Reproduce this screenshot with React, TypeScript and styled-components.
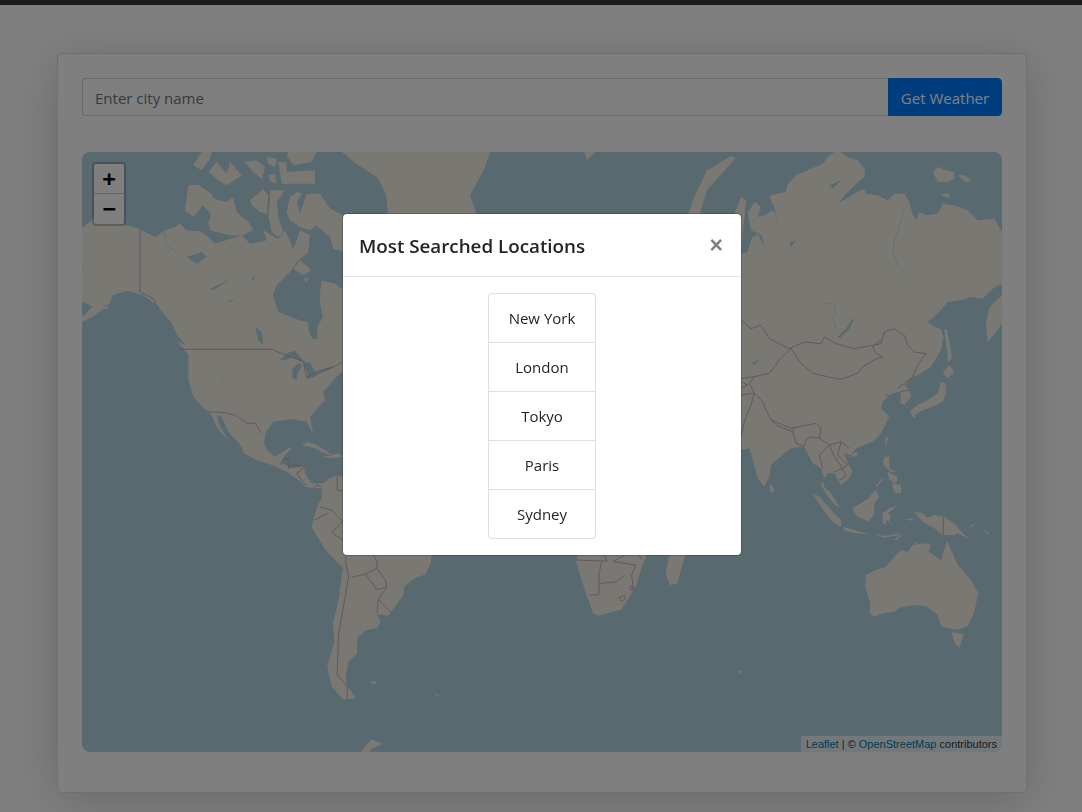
import React from "react";
import styled, { createGlobalStyle } from "styled-components";

const UI_FONT = `"Open Sans", "Noto Sans", "Liberation Sans", sans-serif`;
const LOCATIONS = ["New York", "London", "Tokyo", "Paris", "Sydney"];

const WATER = "#b0d4e0";
const LAND_COLOR = "#f5f0e6";

type Pt = [number, number];

// web mercator at zoom 2 -> page pixels
const geo = (pts: Pt[]): Pt[] =>
  pts.map(([lon, lat]) => {
    const merc = Math.log(Math.tan(Math.PI / 4 + (lat * Math.PI) / 360));
    return [542 + (lon / 360) * 1024, 510 - (merc / (2 * Math.PI)) * 1024];
  });

// traced at 3x from origin ox,oy
const traced = (ox: number, oy: number, pts: Pt[]): Pt[] =>
  pts.map(([x, y]) => [ox + x / 3, oy + y / 3]);

const toPath = (ring: Pt[], close = true) =>
  "M" +
  ring.map(([x, y]) => `${x.toFixed(1)} ${y.toFixed(1)}`).join("L") +
  (close ? "Z" : "");

const ARCTIC = (pts: Pt[]) => traced(130, 152, pts);
const SIBERIA = (pts: Pt[]) => traced(741, 152, pts);
const ASIA = (pts: Pt[]) => traced(741, 340, pts);
const OCEANIA = (pts: Pt[]) => traced(741, 500, pts);
const STATES = (pts: Pt[]) => traced(160, 340, pts);

const LAND: Pt[][] = [
  // north + central america
  [
    ...geo([[-168,65.6],[-164,66.5],[-162,67],[-166,68.3],[-163,69.5],[-157,71.2],[-152,70.8],[-146,70.2]]),
    ...ARCTIC([[0,222],[25,230],[75,255],[105,235],[135,225],[150,215],[170,235],[210,238],[235,255],[255,275],[310,258],[335,250],[360,275],[410,265],[400,235],[425,250],[445,262],[465,235],[490,290],[500,265],[510,235],[540,250],[535,300],[500,330],[480,360],[440,400],[428,430],[445,480]]),
    ...geo([[-85,55.3],[-82.3,55],[-82,53],[-80.5,51.3],[-79,51.5],[-79,54],[-77,56],[-78,58.5],[-78,60.5],[-77.5,62.5],[-73,62],[-70,61],[-69.5,59],[-66,58.5],[-64.5,60.3],[-62,57.5],[-60,55],[-56,52.5],[-59,50.3],[-65,50.2],[-69,48.5],[-65,49.2],[-64.5,48],[-65,47],[-64,46],[-61,45.5],[-65,43.5],[-66.5,45],[-67.5,44.5]]),
    ...STATES([[549,95],[540,100],[490,155],[495,180],[450,230],[460,285],[440,245],[395,238],[340,245],[318,275],[312,310],[320,330],[345,350],[385,325],[400,322],[375,345],[365,370],[400,385],[433,375],[435,400],[455,430],[480,430],[500,432],[485,445],[460,445],[435,440],[415,420],[380,395],[335,375],[290,360],[250,340],[245,320],[205,275],[185,230],[170,225],[180,260],[210,305],[190,285],[170,260],[150,215],[130,205],[100,170],[85,120],[85,45],[55,5]]),
    ...geo([[-125,50],[-128,52],[-130.5,55],[-135,58],[-140,60],[-146,60.8],[-151,60],[-152,58.5],[-158,56],[-164,54.5],[-158,58],[-162,59],[-165,61],[-165,63.5],[-161,64.5],[-166,64.6]]),
  ],
  // canadian arctic
  ARCTIC([[470,180],[480,135],[500,120],[515,125],[500,150],[510,185],[530,125],[570,125],[600,170],[639,190],[660,230],[690,300],[640,300],[610,290],[600,255],[570,230],[560,220],[540,235],[510,225],[480,205]]),
  ARCTIC([[420,115],[465,115],[440,150],[445,195],[460,240],[445,255],[425,240],[415,190],[420,150]]),
  ARCTIC([[360,145],[400,112],[415,130],[410,185],[390,180],[365,160]]),
  ARCTIC([[220,160],[245,135],[265,145],[290,150],[310,135],[320,180],[355,210],[370,235],[340,250],[300,250],[240,235],[235,210],[245,190]]),
  ARCTIC([[165,175],[175,100],[205,98],[250,130],[215,165],[190,195]]),
  ARCTIC([[190,40],[215,0],[245,0],[240,20],[215,55]]),
  ARCTIC([[235,60],[260,30],[290,65],[300,30],[335,70],[290,100],[265,85]]),
  ARCTIC([[345,30],[380,25],[405,45],[395,80],[370,60]]),
  ARCTIC([[445,30],[470,30],[470,60],[555,55],[555,95],[455,95]]),
  ARCTIC([[470,10],[480,-10],[570,-10],[560,0],[545,30],[490,40]]),
  ARCTIC([[415,70],[435,65],[440,95],[420,88]]),
  ARCTIC([[410,15],[440,20],[435,45],[415,35]]),
  ARCTIC([[490,350],[510,325],[545,355],[520,370]]),
  ARCTIC([[520,380],[535,378],[530,390]]),
  geo([[-59,47.7],[-53,46.7],[-52.7,47.6],[-56,51.5],[-57.5,50.5]]),
  geo([[-128.3,50.7],[-123.5,48.4],[-125,48.7]]),
  geo([[-154.5,57.5],[-152.5,57.5],[-153,58.4]]),
  STATES([[425,315],[445,306],[470,315],[525,350],[490,338],[465,325]]),
  STATES([[485,350],[500,348],[535,340],[549,350],[520,355]]),
  // greenland
  [[342,152],[358,165],[378,178],[386,195],[388,214],[400,260],[470,260],[476,213],[470,195],[484,170],[490,152],[490,140],[342,140]],
  // south america
  geo([[-77.5,8.7],[-75,11],[-72,12],[-68,11],[-62,10.7],[-60,8.5],[-54,5.8],[-50,1],[-48,-1],[-44,-2.5],[-38,-3.5],[-35,-5.5],[-35,-9],[-39,-13],[-39,-18],[-41,-22],[-45,-23.5],[-48.5,-26],[-48.7,-28.5],[-52,-32.5],[-54,-34.8],[-58,-34.3],[-56.7,-36.5],[-58,-38.3],[-62,-39],[-65,-41],[-65,-45],[-68,-47],[-69,-50.5],[-68.5,-52.5],[-65.5,-55],[-70,-55.3],[-74,-52.5],[-75.5,-48],[-73,-42],[-73.5,-37],[-71.5,-30],[-70,-20],[-76,-14],[-81,-6],[-80,-2],[-79,1.5],[-77.5,4],[-77.5,7]]),
  geo([[-61,-51.5],[-58,-51.5],[-59,-52.3]]),
  geo([[-38,-54],[-36,-54.5],[-37,-54.6]]),
  geo([[-60,-62.5],[-56,-63.2],[-60,-64],[-62,-66],[-66,-67],[-63,-64]]),
  // africa
  geo([[-17,15],[-17,21],[-13,28],[-6,35.7],[10,37],[11,33],[20,31],[32,31],[37,20],[43,12],[51,12],[40,-3],[39,-10],[35,-20],[33,-26],[28,-33],[20,-34.8],[18,-34],[15,-27],[12,-18],[13.5,-10],[9,-1],[9.5,4],[-4,5],[-8,4.5],[-13,9]]),
  geo([[49.3,-12],[50.5,-15.5],[47.5,-25],[45,-25.5],[43.5,-22],[44.5,-16.5]]),
  geo([[69,-49],[70.5,-49.2],[69.5,-49.8]]),
  // eurasia, closes under the modal
  [
    ...SIBERIA([[0,135],[15,145],[45,150],[70,155],[90,130],[135,120],[140,95],[165,70],[210,50],[245,35],[265,10],[280,0],[300,0],[320,15],[350,25],[372,50],[370,75],[345,95],[320,120],[290,155],[340,125],[370,110],[375,125],[410,130],[440,145],[460,125],[490,125],[505,150],[515,190],[525,205],[535,180],[555,190],[590,185],[605,155],[640,160],[680,175],[710,205],[760,200],[783,240],[790,240],[790,398],[770,398],[750,415],[725,440],[690,435],[660,445],[620,450],[595,480],[560,510],[575,522],[600,532],[608,560]]),
    ...ASIA([[605,0],[600,30],[570,80],[530,105],[510,115],[490,135],[505,150],[510,170],[490,195],[478,190],[480,155],[470,155],[445,165],[425,160],[410,150],[435,130],[450,135],[430,160],[440,170],[425,185],[420,205],[445,230],[435,250],[420,280],[395,305],[345,325],[330,345],[310,340],[320,370],[335,395],[320,420],[300,435],[280,400],[260,400],[245,420],[250,440],[270,460],[295,500],[285,497],[260,470],[240,435],[250,415],[240,385],[215,370],[195,330],[185,320],[150,325],[130,340],[90,375],[85,410],[70,440],[50,415],[30,340],[25,325],[0,330]]),
    [700, 520],
    [700, 300],
  ],
  SIBERIA([[790,425],[760,450],[745,470],[735,510],[740,570],[765,540],[790,505]]),
  geo([[51.5,71.5],[55,71],[58,74],[68,76.8],[66.5,77],[58,75.8],[53,73]]),
  geo([[11,79],[16,76.7],[22,78],[27,80],[15,80.2]]),
  SIBERIA([[575,60],[590,45],[615,55],[640,60],[640,80],[620,90],[590,90]]),
  SIBERIA([[650,70],[670,70],[690,85],[675,92]]),
  SIBERIA([[600,125],[625,125],[625,138],[610,135]]),
  // east asia islands
  [[944,329],[947,330],[950,345],[952,358],[948,362],[947,350]],
  ASIA([[605,100],[625,75],[640,95],[620,115]]),
  ASIA([[600,125],[612,130],[615,160],[605,185],[575,200],[545,210],[520,225],[510,210],[530,195],[560,180],[590,160]]),
  ASIA([[510,210],[525,230],[518,235],[508,215]]),
  ASIA([[432,295],[442,290],[435,318]]),
  ASIA([[330,345],[348,335],[350,345],[335,352]]),
  ASIA([[85,430],[97,440],[100,455],[90,458]]),
  ASIA([[430,350],[445,350],[445,385],[465,395],[450,395],[432,380],[425,365]]),
  ASIA([[440,395],[470,410],[465,430],[445,420]]),
  ASIA([[455,430],[480,435],[480,458],[465,460],[455,445]]),
  ASIA([[405,437],[425,415],[428,418],[408,440]]),
  ASIA([[335,510],[345,495],[380,475],[405,450],[415,470],[400,490],[400,520],[385,545],[350,530]]),
  ASIA([[215,462],[235,470],[270,510],[300,540],[300,560],[280,550],[250,515]]),
  OCEANIA([[305,80],[340,90],[385,103],[345,100],[310,92]]),
  OCEANIA([[425,70],[425,40],[445,25],[470,15],[440,40],[450,45],[445,60],[452,78],[440,60],[432,75]]),
  OCEANIA([[520,35],[545,40],[560,55],[580,45],[610,50],[640,70],[665,100],[685,118],[650,100],[640,105],[605,105],[580,85],[545,65]]),
  OCEANIA([[400,103],[430,108],[480,100],[470,106],[430,113]]),
  OCEANIA([[455,120],[490,100],[470,118]]),
  OCEANIA([[490,58],[520,56],[510,62]]),
  OCEANIA([[670,80],[690,78],[705,65],[695,80]]),
  OCEANIA([[725,85],[745,100],[740,102]]),
  OCEANIA([[515,128],[530,125],[528,132]]),
  OCEANIA([[375,225],[405,210],[435,200],[460,170],[480,150],[500,155],[515,135],[555,130],[570,135],[563,155],[600,180],[610,150],[618,122],[630,150],[650,195],[690,240],[712,280],[700,335],[680,378],[650,390],[625,385],[600,380],[590,345],[560,320],[520,315],[480,322],[460,335],[425,340],[400,350],[385,340],[388,310],[372,260]]),
  OCEANIA([[630,395],[668,403],[655,443],[642,430]]),
];

const LAKES: Pt[][] = [
  STATES([[360,58],[385,38],[405,32],[430,62],[445,75],[420,62],[395,52],[372,62]]),
  STATES([[398,118],[396,88],[418,68],[425,78],[412,100],[410,118]]),
  STATES([[430,68],[450,68],[468,98],[445,112],[440,92]]),
  STATES([[437,118],[450,104],[492,88],[494,94],[460,112]]),
  STATES([[490,88],[518,78],[516,86],[495,94]]),
  ARCTIC([[170,315],[215,300],[230,315],[200,335]]),
  ARCTIC([[240,410],[300,380],[265,405],[250,415]]),
  ARCTIC([[290,450],[320,440],[300,450]]),
  ARCTIC([[365,385],[375,365],[372,385]]),
  [[255,327],[262,332],[263,345],[258,340]],
  STATES([[183,122],[190,125],[188,130]]),
  SIBERIA([[340,500],[325,530],[295,560],[290,555],[315,530],[335,500]]),
  SIBERIA([[145,270],[165,265],[150,285]]),
  SIBERIA([[265,100],[300,85],[275,110]]),
  // ob gulf
  SIBERIA([[0,305],[20,300],[32,258],[50,245],[70,283],[62,250],[42,240],[30,235],[20,180],[42,150],[60,165],[50,195],[70,190],[95,175],[108,195],[115,230],[105,190],[100,165],[85,135],[70,150],[45,145],[15,145]]),
  ASIA([[30,70],[55,60],[40,75]]),
];

const RIVERS: Pt[][] = [
  SIBERIA([[490,170],[480,210],[460,270],[455,300],[470,340],[500,365]]),
  SIBERIA([[255,455],[280,455],[285,480],[275,495],[285,530]]),
  ARCTIC([[100,230],[110,280],[140,300]]),
];

const BORDERS: Pt[][] = [
  ARCTIC([[30,235],[30,420],[50,430],[70,440],[85,470]]),
  STATES([[55,28],[335,28],[365,40],[430,65],[440,112],[470,95],[525,80],[549,65]]),
  STATES([[150,215],[190,218],[225,225],[260,250],[285,250],[305,280]]),
  STATES([[360,375],[372,355],[390,355],[385,385]]),
  STATES([[385,385],[400,375],[435,380],[410,400]]),
  STATES([[410,400],[430,430],[440,435]]),
  STATES([[460,445],[470,435],[485,440]]),
  // asia
  SIBERIA([[0,505],[30,530],[60,520],[85,560],[145,590],[190,570],[240,575],[250,555],[285,575],[340,590],[395,580],[420,575],[430,540],[460,530],[490,550],[500,580],[520,600],[555,605]]),
  ASIA([[555,40],[530,75],[515,110],[490,130],[470,145]]),
  ASIA([[150,25],[180,70],[215,100],[260,110],[300,118],[350,100],[365,80],[400,60],[425,50],[405,40],[395,20],[420,0]]),
  ASIA([[150,25],[115,60],[100,80],[85,100],[40,110],[25,130],[40,160],[65,185],[75,210],[90,240],[150,265],[225,250],[240,265],[235,295],[265,315],[300,305],[325,325]]),
  ASIA([[40,160],[30,195],[10,245],[0,290]]),
  ASIA([[90,240],[110,258],[155,275],[160,262]]),
  ASIA([[155,275],[165,310],[190,320],[195,300],[210,290],[235,295]]),
  ASIA([[265,315],[235,345],[245,385]]),
  ASIA([[265,315],[280,350],[305,385],[320,375],[290,345],[300,305]]),
  ASIA([[280,395],[305,385],[315,410],[295,420]]),
  ASIA([[0,115],[40,110]]),
  ASIA([[0,165],[40,160]]),
  ASIA([[480,155],[505,150]]),
  ASIA([[345,495],[385,470]]),
  ASIA([[0,125],[20,135],[0,145]]),
  OCEANIA([[607,50],[607,105]]),
  // south america
  geo([[-69,-18],[-68,-23],[-70,-33],[-71.5,-40],[-72,-50],[-68.5,-52.5],[-68.5,-55]]),
  geo([[-69,-18],[-69,-11],[-65,-10],[-60,-14],[-58,-18],[-58,-20],[-62,-22],[-67,-23]]),
  geo([[-62,-22],[-58,-27],[-54.5,-26],[-55,-24],[-58,-20]]),
  geo([[-54.5,-26],[-57.5,-30],[-53,-34]]),
  geo([[-58,-34],[-57.5,-30]]),
  geo([[-69,-11],[-74,-8],[-70,-4],[-74,0],[-78,1]]),
  geo([[-80,-3.5],[-75,-1]]),
  geo([[-70,-4],[-67,1],[-67,6],[-72,7],[-72,12]]),
  geo([[-60,8],[-60,5],[-67,1]]),
  // southern africa
  geo([[12,-17.3],[23,-17.7]]),
  geo([[16.5,-28.6],[20,-28.5],[20,-22],[21,-18]]),
  geo([[20,-25],[26,-24.5],[29,-22.3]]),
  geo([[25,-17.8],[33,-19],[31.5,-22.3]]),
  geo([[31.5,-22.3],[32,-26],[33,-27]]),
  geo([[27,-29.5],[29,-28.7],[29.4,-29.7],[28,-30.5],[27,-29.5]]),
  geo([[31,-26],[32,-26],[32,-27.2],[31,-27],[31,-26]]),
  geo([[34.5,-11.5],[40.5,-10.5]]),
  geo([[22,-11],[24,-11],[24,-13],[22,-13],[22,-16],[23,-17.7]]),
  geo([[33,-14],[35,-17]]),
  geo([[25,-17.8],[29,-15.7],[33,-14]]),
];

const GlobalStyle = createGlobalStyle`
  html, body {
    margin: 0;
    height: 812px;
    overflow: hidden;
    background: #fff;
    color: #212529;
    font-family: ${UI_FONT};
    font-size: 15px;
  }
`;

const TopBar = styled.div`
  height: 5px;
  background: #343a40;
`;

const Page = styled.main`
  padding: 48px 55px 0 57px;
`;

const Card = styled.section`
  box-sizing: border-box;
  height: 740px;
  padding: 24px;
  background: #fff;
  border: 1px solid rgba(0, 0, 0, 0.125);
  border-radius: 5px;
  box-shadow: 0 8px 48px rgba(0, 0, 0, 0.175);
`;

const SearchRow = styled.form`
  display: flex;
  height: 38px;
  margin-bottom: 36px;
`;

const CityInput = styled.input`
  flex: 1;
  min-width: 0;
  box-sizing: border-box;
  padding: 2px 12px 0;
  font: inherit;
  color: #495057;
  background: #fff;
  border: 1px solid #ced4da;
  border-right: 0;
  border-radius: 4px 0 0 4px;
  outline: none;
  &::placeholder {
    color: #6c757d;
    opacity: 1;
  }
`;

const SearchButton = styled.button`
  width: 114px;
  padding: 2px 0 0;
  font: inherit;
  color: #fff;
  background: #007bff;
  border: 1px solid #007bff;
  border-radius: 0 4px 4px 0;
`;

const MapBox = styled.div`
  position: relative;
  height: 600px;
  overflow: hidden;
  border-radius: 8px;
  background: ${WATER};
`;

const MapArt = styled.svg`
  display: block;
  width: 920px;
  height: 600px;
`;

const ZoomBar = styled.div`
  position: absolute;
  top: 10px;
  left: 10px;
  border: 2px solid rgba(0, 0, 0, 0.2);
  border-radius: 4px;
  background-clip: padding-box;
`;

const ZoomButton = styled.a<{ $last?: boolean }>`
  display: block;
  width: 30px;
  height: 30px;
  box-sizing: border-box;
  text-align: center;
  font: 700 22px/30px "DejaVu Sans Mono", "Liberation Mono", monospace;
  color: #000;
  background: #fff;
  border-bottom: ${(p) => (p.$last ? "0" : "1px solid #ccc")};
  border-radius: ${(p) => (p.$last ? "0 0 2px 2px" : "2px 2px 0 0")};
`;

const Attribution = styled.div`
  position: absolute;
  right: 0;
  bottom: 0;
  height: 16px;
  padding: 0 5px;
  font: 11px/16px "Liberation Sans", Arial, sans-serif;
  color: #333;
  background: rgba(255, 255, 255, 0.7);
`;

const AttributionLink = styled.a`
  color: #0078a8;
`;

const Backdrop = styled.div`
  position: fixed;
  inset: 0;
  display: flex;
  justify-content: center;
  align-items: flex-start;
  padding: 213px 0 0 2px;
  background: rgba(0, 0, 0, 0.5);
`;

const Modal = styled.div`
  box-sizing: border-box;
  width: 400px;
  height: 343px;
  background: #fff;
  border: 1px solid rgba(0, 0, 0, 0.2);
  background-clip: padding-box;
  border-radius: 5px;
`;

const ModalHeader = styled.header`
  display: flex;
  align-items: center;
  justify-content: space-between;
  box-sizing: border-box;
  height: 63px;
  padding: 0 18px 0 16px;
  border-bottom: 1px solid #dee2e6;
`;

const ModalTitle = styled.h5`
  margin: 2px 0 0;
  font-size: 18.8px;
  font-weight: 600;
  line-height: 30px;
  color: #212529;
`;

const CloseButton = styled.button`
  padding: 0;
  font: 700 23px/24px "Liberation Sans", Arial, sans-serif;
  color: #000;
  opacity: 0.5;
  background: none;
  border: 0;
`;

const ModalBody = styled.div`
  display: flex;
  justify-content: center;
  padding: 16px;
`;

const LocationList = styled.ul`
  box-sizing: border-box;
  width: 108px;
  height: 246px;
  margin: 0;
  padding: 0;
  list-style: none;
  border: 1px solid rgba(0, 0, 0, 0.125);
  border-radius: 4px;
`;

const LocationItem = styled.li`
  height: 48px;
  line-height: 48px;
  text-align: center;
  color: #212529;
  & + & {
    border-top: 1px solid rgba(0, 0, 0, 0.125);
  }
`;

const WorldMap = () => (
  <MapArt viewBox="82 152 920 600">
    <path fill={LAND_COLOR} d={LAND.map((r) => toPath(r)).join("")} />
    <path fill={WATER} d={LAKES.map((r) => toPath(r)).join("")} />
    <path
      fill="none"
      stroke={WATER}
      strokeWidth={0.6}
      d={RIVERS.map((r) => toPath(r, false)).join("")}
    />
    <path
      fill="none"
      stroke="#b8a0b4"
      strokeWidth={0.8}
      d={BORDERS.map((r) => toPath(r, false)).join("")}
    />
  </MapArt>
);

const App = () => {
  return (
    <>
      <GlobalStyle />
      <TopBar />
      <Page>
        <Card>
          <SearchRow onSubmit={(e) => e.preventDefault()}>
            <CityInput placeholder="Enter city name" />
            <SearchButton type="submit">Get Weather</SearchButton>
          </SearchRow>
          <MapBox>
            <WorldMap />
            <ZoomBar>
              <ZoomButton>+</ZoomButton>
              <ZoomButton $last>−</ZoomButton>
            </ZoomBar>
            <Attribution>
              <AttributionLink>Leaflet</AttributionLink> | ©{" "}
              <AttributionLink>OpenStreetMap</AttributionLink> contributors
            </Attribution>
          </MapBox>
        </Card>
      </Page>
      <Backdrop>
        <Modal>
          <ModalHeader>
            <ModalTitle>Most Searched Locations</ModalTitle>
            <CloseButton type="button">×</CloseButton>
          </ModalHeader>
          <ModalBody>
            <LocationList>
              {LOCATIONS.map((city) => (
                <LocationItem key={city}>{city}</LocationItem>
              ))}
            </LocationList>
          </ModalBody>
        </Modal>
      </Backdrop>
    </>
  );
};

export default App;
